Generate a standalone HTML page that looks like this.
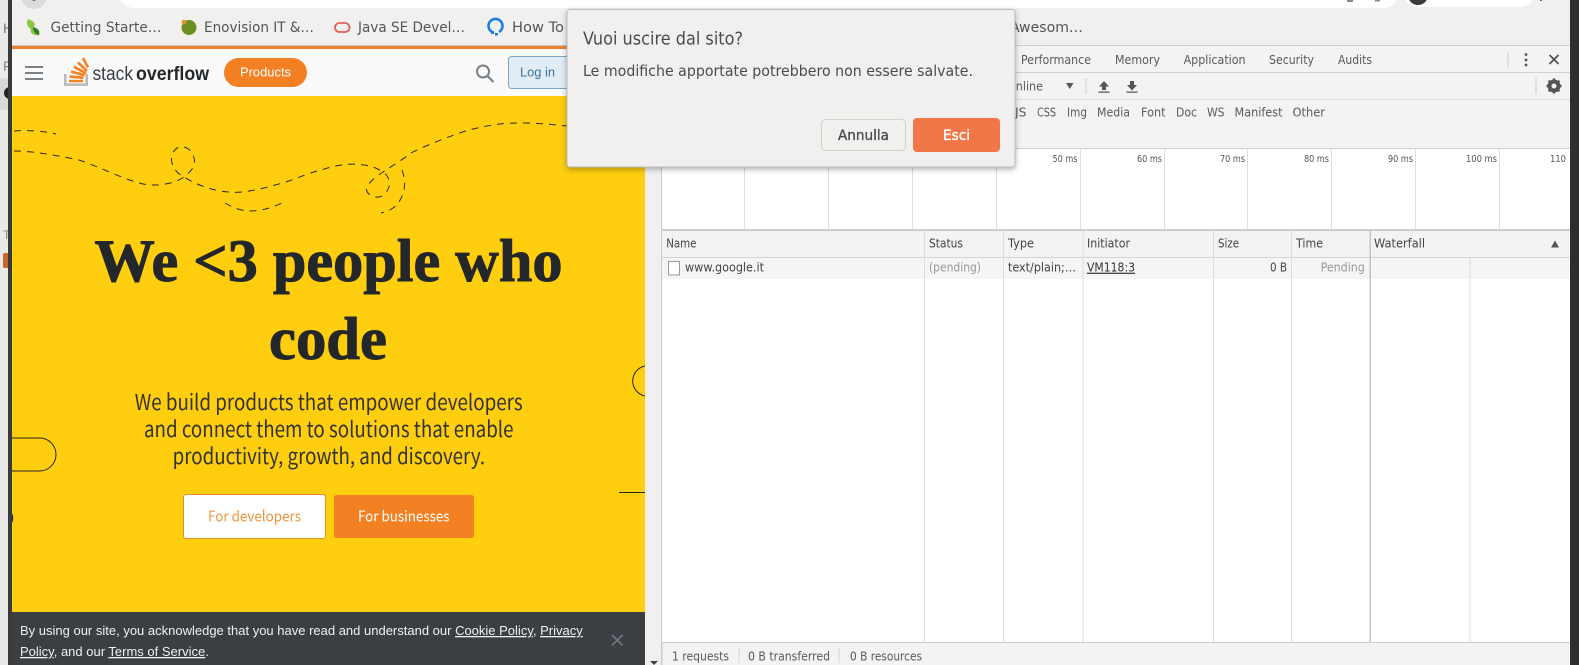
<!DOCTYPE html>
<html lang="en"><head><meta charset="utf-8"><title>Stack Overflow</title>
<style>
html,body{margin:0;padding:0;width:1579px;height:665px;overflow:hidden;background:#fff}
svg{display:block}
text{white-space:pre}
.u{font-family:"DejaVu Sans",sans-serif;fill:#555}
.b{font-size:14px;fill:#555}
.t{font-size:12px;fill:#5a5a5a}
.f{font-size:12px;fill:#5a5a5a}
.o{font-size:10px;fill:#555}
.r{font-size:12px;fill:#444}
.a{font-family:"Liberation Sans",Arial,sans-serif}
.s{font-family:"Noto Sans CJK JP","Liberation Sans",sans-serif}
.sub{font-size:22px;fill:#33332c}
.h{font-family:"Liberation Serif",serif;font-weight:700;font-size:60px;fill:#242729;stroke:#242729;stroke-width:1px}
</style></head><body>
<svg width="1579" height="665" viewBox="0 0 1579 665" xmlns="http://www.w3.org/2000/svg">
<defs><filter id="sh" x="-5%" y="-10%" width="110%" height="125%"><feDropShadow dx="0" dy="2" stdDeviation="3" flood-color="#000" flood-opacity=".3"/></filter></defs>
<!-- window background -->
<rect width="1579" height="665" fill="#e9e9e9"/>
<rect x="0" y="78" width="8" height="32" fill="#d9d9d9"/>
<text x="3" y="33" class="a" font-size="14" fill="#777">H</text>
<text x="3" y="71" class="a" font-size="14" fill="#888">F</text>
<circle cx="10" cy="93" r="6" fill="#222"/>
<text x="3" y="239" class="a" font-size="12" fill="#888">T</text>
<rect x="3" y="253" width="6" height="15" rx="2" fill="#c9662a"/>
<rect x="8" y="0" width="4" height="665" fill="#3a3a3a"/>
<rect x="1570" y="0" width="9" height="665" fill="#2e2e2e"/>
<!-- toolbar -->
<rect x="12" y="0" width="1558" height="46" fill="#f1f0ef"/>
<circle cx="34" cy="-4" r="13" fill="#dcdcdc"/>
<circle cx="34" cy="-1" r="2" fill="#666"/>
<path d="M120 0 H1396 q-3 8 -12 8 H134 q-9 0 -14 -8z" fill="#fff"/>
<rect x="1347" y="0" width="6" height="2" fill="#888"/><rect x="1375" y="0" width="5" height="1.500" fill="#888"/>
<path d="M1405 0 H1532 q-4 7 -13 7 H1418 q-9 0 -13 -7z" fill="#fff"/>
<circle cx="1418" cy="-5" r="10" fill="#3a3a3a"/>
<rect x="1540" y="0" width="2" height="1" fill="#666"/>
<!-- bookmarks -->
<path d="M28 19 C34 21 37 24 33 28 C38 27 41 31 39 35 C34 36 29 33 31 29 C27 27 26 23 28 19z" fill="#8cc63f"/>
<path d="M33 27 C37 28 40 31 39 35 C36 35 33 32 33 27z" fill="#2e7d32"/>
<text x="50.5" y="32" class="u b" textLength="111" lengthAdjust="spacingAndGlyphs">Getting Starte…</text>
<circle cx="189" cy="27.5" r="7.5" fill="#6b8e23"/><circle cx="184" cy="22" r="2.3" fill="#e8912a"/>
<text x="204" y="32" class="u b" textLength="110" lengthAdjust="spacingAndGlyphs">Enovision IT &amp;…</text>
<rect x="335" y="23" width="14.5" height="9" rx="4.5" fill="none" stroke="#e0605a" stroke-width="1.8"/>
<text x="358" y="32" class="u b" textLength="107" lengthAdjust="spacingAndGlyphs">Java SE Devel…</text>
<path d="M492 32 A7 7 0 1 1 499 32" fill="none" stroke="#1a7fe0" stroke-width="2.600"/>
<rect x="491" y="31" width="3" height="3" fill="#1a7fe0"/><rect x="495" y="33" width="3" height="2.500" fill="#1a7fe0"/>
<text x="512" y="32" class="u b" textLength="52" lengthAdjust="spacingAndGlyphs">How To</text>
<text x="1010" y="32" class="u b" textLength="73" lengthAdjust="spacingAndGlyphs">Awesom…</text>

<!-- left page -->
<rect x="12" y="45" width="650" height="1" fill="#c9c9c9"/>
<rect x="12" y="46" width="650" height="3" fill="#e8842f"/>
<rect x="12" y="49" width="633" height="47" fill="#fafafb"/>
<g stroke="#7a8188" stroke-width="2"><path d="M25 67h18M25 73h18M25 79h18"/></g>
<path d="M65.300 74v10.700h21.400V74" fill="none" stroke="#bcbbbb" stroke-width="2.600"/>
<g stroke="#f48024" stroke-width="2.600" fill="none"><path d="M69 81h14M69.500 76.500l14 1.200M71 71.500l13.500 3.800M74 66.800l12 6.500M78 62.500l9 8.500M83 58l5 9.500"/></g>
<text x="92.500" y="80" class="a" font-size="19" fill="#3b4045" textLength="40.500" lengthAdjust="spacingAndGlyphs">stack</text>
<text x="136" y="80" class="a" font-size="19" font-weight="700" fill="#242729" textLength="73" lengthAdjust="spacingAndGlyphs">overflow</text>
<rect x="224" y="58" width="83" height="29" rx="14.500" fill="#f48024"/>
<text x="240" y="76.500" class="a" font-size="13" fill="#fff" textLength="51" lengthAdjust="spacingAndGlyphs">Products</text>
<circle cx="483" cy="71.500" r="6" fill="none" stroke="#7a8188" stroke-width="2"/><path d="M487.500 76l6 6" stroke="#7a8188" stroke-width="2.200"/>
<rect x="508.500" y="56.500" width="70" height="32" rx="3" fill="#e1ecf4" stroke="#7aa7c7"/>
<text x="520" y="76.500" class="a" font-size="13" fill="#39739d" textLength="35" lengthAdjust="spacingAndGlyphs">Log in</text>

<!-- hero -->
<rect x="12" y="96" width="633" height="516" fill="#ffce0f"/>
<g fill="none" stroke="#2c2a1c" stroke-width="1" stroke-dasharray="7 6">
<path d="M14 131 C28 130 44 131 56 134"/>
<path d="M14 151 C30 151 50 154 79 160 C100 167 125 180 143 184 C158 187 176 183 184 177 C192 171 196 165 194 158 C192 150 186 146 180 147 C174 148 170 156 172 163 C174 170 178 174 184 177 C195 184 212 191 229 192 C245 194 268 187 286 182 C300 177 312 172 321 170 C340 164 352 163 364 165 C373 166 378 169 383 172 C389 176 390 182 389 187 C387 193 382 198 376 197 C369 196 365 191 367 187 C370 181 377 176 383 172 C392 166 402 160 411 153 C425 146 440 140 454 135 C470 129 485 126 500 124 C520 122 540 123 567 126"/>
<path d="M402 170 C405 178 405 184 404 190 C402 198 398 205 393 208 C389 211 385 212 381 213"/>
<path d="M225 203 C233 208 242 211 250 211 C262 211 274 207 284 202"/>
</g>
<path d="M12 438H39.500A16.500 16.500 0 0 1 39.500 471H12" fill="none" stroke="#222" stroke-width="1"/>
<path d="M645 366A15.300 15.300 0 0 0 645 396" fill="none" stroke="#222" stroke-width="1"/>
<rect x="619" y="492" width="26" height="1" fill="#222"/>
<path d="M12 513q2.500 5 0 10z" fill="#222"/>
<text x="94.500" y="281" class="h" textLength="468" lengthAdjust="spacingAndGlyphs">We &lt;3 people who</text>
<text x="269" y="359" class="h" textLength="118" lengthAdjust="spacingAndGlyphs">code</text>
<text x="134.700" y="410" class="s sub" textLength="388" lengthAdjust="spacingAndGlyphs">We build products that empower developers</text>
<text x="144" y="437" class="s sub" textLength="369.500" lengthAdjust="spacingAndGlyphs">and connect them to solutions that enable</text>
<text x="172.600" y="464" class="s sub" textLength="312.500" lengthAdjust="spacingAndGlyphs">productivity, growth, and discovery.</text>
<rect x="183.500" y="494.500" width="142" height="44" rx="2.500" fill="#fff" stroke="#ef8b2c"/>
<text x="208" y="521.500" class="s" font-size="15" fill="#f0953e" textLength="93" lengthAdjust="spacingAndGlyphs">For developers</text>
<rect x="334" y="495" width="140" height="43" rx="2.500" fill="#f48024"/>
<text x="358" y="521.500" class="s" font-size="15" fill="#fff" textLength="91.500" lengthAdjust="spacingAndGlyphs">For businesses</text>

<!-- cookie banner -->
<rect x="12" y="612" width="633" height="53" fill="#3b3e43"/>
<text x="20" y="635" class="a" font-size="13" fill="#eff0f1">By using our site, you acknowledge that you have read and understand our <tspan text-decoration="underline">Cookie Policy</tspan>, <tspan text-decoration="underline">Privacy</tspan></text>
<text x="20" y="656" class="a" font-size="13" fill="#eff0f1"><tspan text-decoration="underline">Policy</tspan>, and our <tspan text-decoration="underline">Terms of Service</tspan>.</text>
<path d="M612 635l10.500 10.500M622.500 635L612 645.500" stroke="#6f767d" stroke-width="1.800"/>

<!-- page scrollbar -->
<rect x="645" y="49" width="16" height="616" fill="#f0f0f0"/>
<path d="M650 661h8l-4 4z" fill="#444"/>

<!-- devtools -->
<rect x="661" y="45" width="909" height="620" fill="#f3f3f3"/>
<rect x="661" y="49" width="1.500" height="616" fill="#c9c9c9"/>
<rect x="662" y="45" width="908" height="1" fill="#cfcfcf"/>
<rect x="662" y="72" width="908" height="1" fill="#d0d0d0"/>
<rect x="662" y="99" width="908" height="1" fill="#d8d8d8"/>
<rect x="662" y="148" width="908" height="1" fill="#d0d0d0"/>
<text x="1021" y="64" class="u t" textLength="70" lengthAdjust="spacingAndGlyphs">Performance</text>
<text x="1115" y="64" class="u t" textLength="45" lengthAdjust="spacingAndGlyphs">Memory</text>
<text x="1183.600" y="64" class="u t" textLength="62" lengthAdjust="spacingAndGlyphs">Application</text>
<text x="1269" y="64" class="u t" textLength="45" lengthAdjust="spacingAndGlyphs">Security</text>
<text x="1338" y="64" class="u t" textLength="34" lengthAdjust="spacingAndGlyphs">Audits</text>
<rect x="1507.500" y="52" width="1" height="15" fill="#ccc"/>
<g fill="#555"><circle cx="1526" cy="54.500" r="1.400"/><circle cx="1526" cy="60" r="1.400"/><circle cx="1526" cy="65" r="1.400"/></g>
<path d="M1549.500 55l9 9M1558.500 55l-9 9" stroke="#555" stroke-width="1.800"/>
<text x="1007" y="90.500" class="u t" textLength="36" lengthAdjust="spacingAndGlyphs">Online</text>
<path d="M1066 83h7.500l-3.750 6z" fill="#555"/>
<rect x="1085.500" y="78" width="1" height="16" fill="#ccc"/>
<path d="M1104 81l5 5.500h-3v3.500h-4v-3.500h-3zM1098.500 91.500h11v1.300h-11z" fill="#555"/>
<path d="M1130 81h4v4h3l-5 5.500-5-5.500h3zM1126.500 91.500h11v1.300h-11z" fill="#555"/>
<rect x="1535.500" y="78" width="1" height="16" fill="#ccc"/>
<circle cx="1554" cy="86" r="4.800" fill="none" stroke="#555" stroke-width="3.400"/>
<g stroke="#555" stroke-width="2.400"><path d="M1554 78.500v15M1546.500 86h15M1548.700 80.700l10.600 10.600M1559.300 80.700l-10.600 10.600"/></g>
<circle cx="1554" cy="86" r="2.500" fill="#f3f3f3"/>
<text x="1015" y="116.700" class="u f" textLength="11.500" lengthAdjust="spacingAndGlyphs">JS</text>
<text x="1037" y="116.700" class="u f" textLength="19" lengthAdjust="spacingAndGlyphs">CSS</text>
<text x="1067" y="116.700" class="u f" textLength="20" lengthAdjust="spacingAndGlyphs">Img</text>
<text x="1097" y="116.700" class="u f" textLength="33" lengthAdjust="spacingAndGlyphs">Media</text>
<text x="1141" y="116.700" class="u f" textLength="24.500" lengthAdjust="spacingAndGlyphs">Font</text>
<text x="1176" y="116.700" class="u f" textLength="21" lengthAdjust="spacingAndGlyphs">Doc</text>
<text x="1207" y="116.700" class="u f" textLength="17.500" lengthAdjust="spacingAndGlyphs">WS</text>
<text x="1234.500" y="116.700" class="u f" textLength="48" lengthAdjust="spacingAndGlyphs">Manifest</text>
<text x="1292.500" y="116.700" class="u f" textLength="32.500" lengthAdjust="spacingAndGlyphs">Other</text>

<!-- overview -->
<rect x="662" y="149" width="908" height="80" fill="#fff"/>
<g fill="#dedede">
<rect x="744" y="149" width="1" height="80"/><rect x="828" y="149" width="1" height="80"/><rect x="912" y="149" width="1" height="80"/><rect x="996" y="149" width="1" height="80"/><rect x="1080" y="149" width="1" height="80"/><rect x="1164" y="149" width="1" height="80"/><rect x="1247" y="149" width="1" height="80"/><rect x="1331" y="149" width="1" height="80"/><rect x="1415" y="149" width="1" height="80"/><rect x="1499" y="149" width="1" height="80"/>
</g>
<text x="1052.500" y="162" class="u o" textLength="25" lengthAdjust="spacingAndGlyphs">50 ms</text>
<text x="1137" y="162" class="u o" textLength="25" lengthAdjust="spacingAndGlyphs">60 ms</text>
<text x="1220" y="162" class="u o" textLength="25" lengthAdjust="spacingAndGlyphs">70 ms</text>
<text x="1304" y="162" class="u o" textLength="25" lengthAdjust="spacingAndGlyphs">80 ms</text>
<text x="1388" y="162" class="u o" textLength="25" lengthAdjust="spacingAndGlyphs">90 ms</text>
<text x="1466" y="162" class="u o" textLength="31" lengthAdjust="spacingAndGlyphs">100 ms</text>
<text x="1550" y="162" class="u o" textLength="16" lengthAdjust="spacingAndGlyphs">110</text>

<!-- table -->
<rect x="662" y="229" width="908" height="2" fill="#cdcdcd"/>
<rect x="662" y="231" width="908" height="26" fill="#f3f3f3"/>
<rect x="662" y="257" width="908" height="1" fill="#d4d4d4"/>
<rect x="662" y="258" width="908" height="21" fill="#f5f5f5"/>
<rect x="662" y="279" width="908" height="363" fill="#fff"/>
<g fill="#dcdcdc">
<rect x="924" y="231" width="1" height="411"/><rect x="1003" y="231" width="1" height="411"/><rect x="1082.500" y="231" width="1" height="411"/><rect x="1213" y="231" width="1" height="411"/><rect x="1291" y="231" width="1" height="411"/><rect x="1469.500" y="257" width="1" height="385"/>
</g>
<rect x="1369.500" y="231" width="1.500" height="411" fill="#c4c4c4"/>
<text x="666.200" y="247.700" class="u r" textLength="30.300" lengthAdjust="spacingAndGlyphs">Name</text>
<text x="929" y="247.700" class="u r" textLength="34" lengthAdjust="spacingAndGlyphs">Status</text>
<text x="1008" y="247.700" class="u r" textLength="26" lengthAdjust="spacingAndGlyphs">Type</text>
<text x="1087" y="247.700" class="u r" textLength="43" lengthAdjust="spacingAndGlyphs">Initiator</text>
<text x="1218" y="247.700" class="u r" textLength="21" lengthAdjust="spacingAndGlyphs">Size</text>
<text x="1296" y="247.700" class="u r" textLength="27" lengthAdjust="spacingAndGlyphs">Time</text>
<text x="1374" y="247.700" class="u r" textLength="51" lengthAdjust="spacingAndGlyphs">Waterfall</text>
<path d="M1551 247.500l4-7 4 7z" fill="#555"/>
<rect x="668.500" y="261.500" width="11" height="13.500" fill="#fff" stroke="#9a9a9a"/>
<text x="685" y="271.700" class="u r" textLength="79" lengthAdjust="spacingAndGlyphs">www.google.it</text>
<text x="929" y="271.700" class="u r" style="fill:#999" textLength="52" lengthAdjust="spacingAndGlyphs">(pending)</text>
<text x="1008" y="271.700" class="u r" textLength="68" lengthAdjust="spacingAndGlyphs">text/plain;…</text>
<text x="1087" y="271.700" class="u r" style="fill:#333" text-decoration="underline" textLength="48" lengthAdjust="spacingAndGlyphs">VM118:3</text>
<text x="1270" y="271.700" class="u r" textLength="17" lengthAdjust="spacingAndGlyphs">0 B</text>
<text x="1320.600" y="271.700" class="u r" style="fill:#999" textLength="44.200" lengthAdjust="spacingAndGlyphs">Pending</text>

<!-- status bar -->
<rect x="662" y="642" width="908" height="1" fill="#cfcfcf"/>
<rect x="738.500" y="648" width="1" height="15" fill="#d4d4d4"/>
<rect x="838.500" y="648" width="1" height="15" fill="#d4d4d4"/>
<text x="672" y="660.700" class="u f" textLength="57" lengthAdjust="spacingAndGlyphs">1 requests</text>
<text x="748" y="660.700" class="u f" textLength="82" lengthAdjust="spacingAndGlyphs">0 B transferred</text>
<text x="850" y="660.700" class="u f" textLength="72" lengthAdjust="spacingAndGlyphs">0 B resources</text>

<!-- dialog -->
<rect x="567" y="9.500" width="448" height="157.500" rx="3" fill="#f1f0ee" stroke="#bdbcba" filter="url(#sh)"/>
<text x="583" y="44.500" class="u" font-size="17.500" style="fill:#4b4b4b" textLength="160" lengthAdjust="spacingAndGlyphs">Vuoi uscire dal sito?</text>
<text x="583" y="76" class="u" font-size="15" style="fill:#4b4b4b" textLength="390" lengthAdjust="spacingAndGlyphs">Le modifiche apportate potrebbero non essere salvate.</text>
<rect x="821.500" y="119.500" width="84" height="31" rx="4" fill="#f1f0ee" stroke="#d3d1ce"/>
<text x="838" y="140" class="u" font-size="14" style="fill:#4b4b4b;stroke:#4b4b4b;stroke-width:.35px" textLength="51" lengthAdjust="spacingAndGlyphs">Annulla</text>
<rect x="913" y="118" width="87" height="34" rx="4" fill="#f27748"/>
<text x="943" y="140" class="u" font-size="14" style="fill:#fff;stroke:#fff;stroke-width:.35px" textLength="27" lengthAdjust="spacingAndGlyphs">Esci</text>
</svg>
</body></html>
